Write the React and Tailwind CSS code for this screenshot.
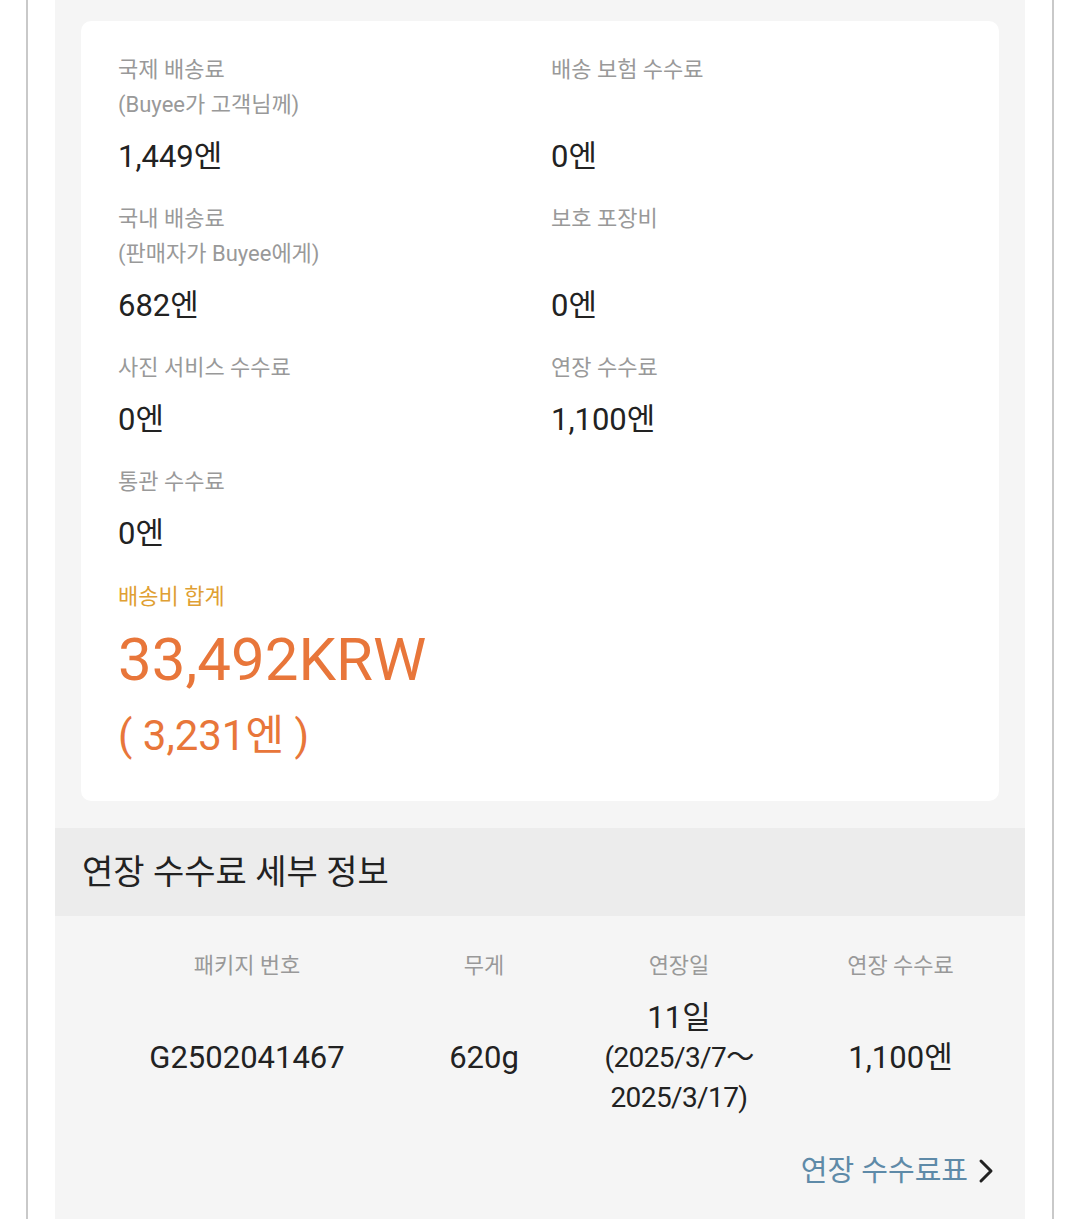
import React from 'react';

const fees = [
  { label: ['국제 배송료', '(Buyee가 고객님께)'], value: '1,449엔' },
  { label: ['배송 보험 수수료'], value: '0엔', tall: true },
  { label: ['국내 배송료', '(판매자가 Buyee에게)'], value: '682엔' },
  { label: ['보호 포장비'], value: '0엔', tall: true },
  { label: ['사진 서비스 수수료'], value: '0엔' },
  { label: ['연장 수수료'], value: '1,100엔' },
  { label: ['통관 수수료'], value: '0엔' },
];

function FeeCell({ item }) {
  return (
    <div className="flex flex-col">
      <div className="text-[22px] leading-[35px] text-[#999999]">
        {item.label.map((l) => (
          <div key={l}>{l}</div>
        ))}
        {item.tall && <div>&nbsp;</div>}
      </div>
      <div className="mt-[17px] text-[31px] leading-[36px] text-[#222222]">{item.value}</div>
    </div>
  );
}

export default function App() {
  return (
    <div className="min-h-[1219px] bg-white font-['Roboto','Noto_Sans_CJK_KR',sans-serif]">
      <div className="mx-[26px] min-h-[1219px] border-x-2 border-[#c9c9c9] bg-white px-[27px]">
        <div className="min-h-[1219px] bg-[#f5f5f5]">
          {/* fee card */}
          <div className="px-[26px] pt-[21px]">
            <div className="rounded-[10px] bg-white px-[37px] pt-[31px] pb-[39px]">
              <div className="grid grid-cols-2 gap-x-[22px] gap-y-[26px]">
                {fees.map((f, i) => (
                  <FeeCell key={i} item={f} />
                ))}
              </div>
              <div className="mt-[27px] text-[22px] leading-[35px] text-[#dfa033]">배송비 합계</div>
              <div className="mt-[10px] text-[60px] leading-[72px] text-[#e8763a]">33,492KRW</div>
              <div className="mt-[14px] text-[42px] leading-[52px] text-[#e8763a]">( 3,231엔 )</div>
            </div>
          </div>

          {/* extension fee details */}
          <div className="mt-[27px] flex h-[88px] items-center bg-[#ececec] px-[27px] text-[34px] text-[#222222]">
            연장 수수료 세부 정보
          </div>
          <div className="px-[27px] pt-[35px] pb-[28px]">
            <div className="grid grid-cols-[330px_144px_246px_197px] text-center text-[22px] leading-[30px] text-[#999999]">
              <div>패키지 번호</div>
              <div>무게</div>
              <div>연장일</div>
              <div>연장 수수료</div>
            </div>
            <div className="mt-[17px] grid grid-cols-[330px_144px_246px_197px] items-center text-center text-[31px] leading-[40px] text-[#222222]">
              <div>G2502041467</div>
              <div>620g</div>
              <div>
                <div>11일</div>
                <div className="text-[28px] tracking-[-0.6px]">(2025/3/7～</div>
                <div className="text-[28px] tracking-[-0.6px]">2025/3/17)</div>
              </div>
              <div>1,100엔</div>
            </div>
            <div className="mt-[33px] flex items-center justify-end pr-[3px]">
              <span className="text-[29px] leading-[40px] text-[#5e8aa8]">연장 수수료표</span>
              <svg className="ml-[9px]" width="18" height="26" viewBox="0 0 18 26" fill="none">
                <path d="M4 3 L14 13 L4 23" stroke="#222222" strokeWidth="3" strokeLinecap="round" strokeLinejoin="round" />
              </svg>
            </div>
          </div>
        </div>
      </div>
    </div>
  );
}
